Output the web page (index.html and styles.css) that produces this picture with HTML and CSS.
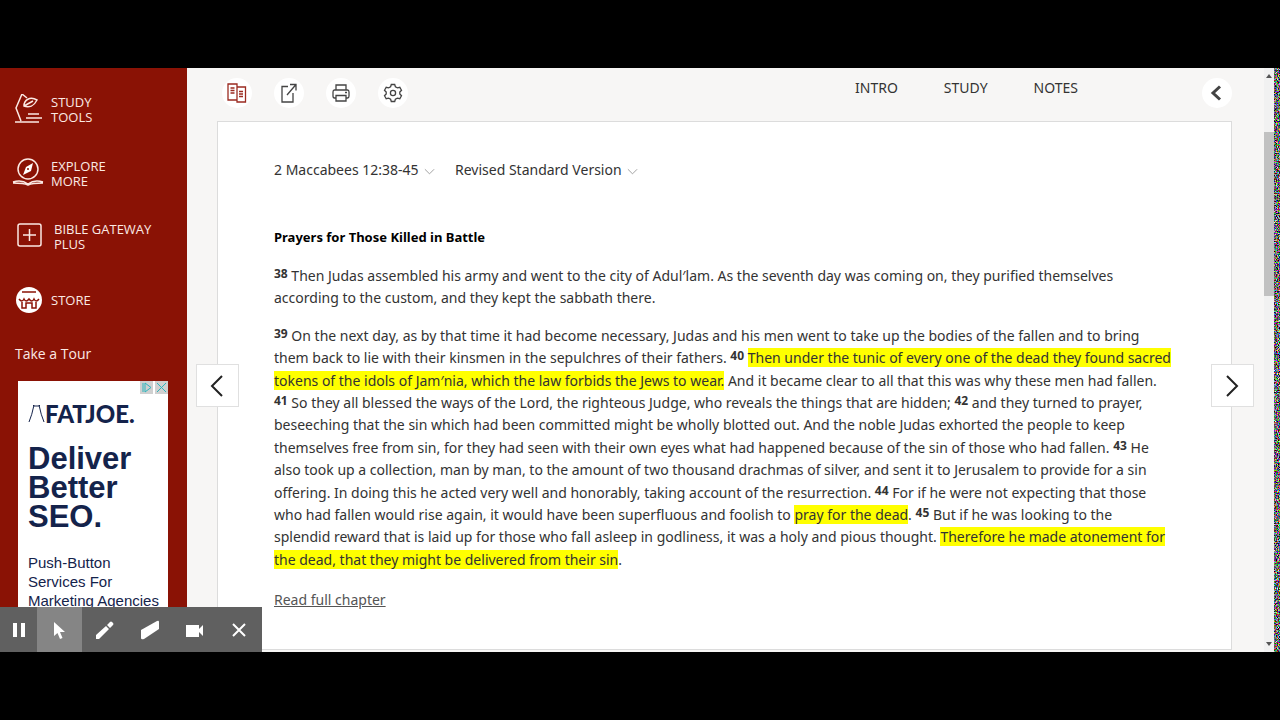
FILE: index.html
```html
<!DOCTYPE html>
<html lang="en">
<head>
	<meta charset="UTF-8">
	<meta name="viewport" content="width=device-width, initial-scale=1.0">
	<title>2 Maccabees 12:38-45 RSV</title>
	<link rel="stylesheet" href="styles.css">
</head>
<body>
	<div class="stage">
		<aside class="sidebar">
			<nav class="menu">
				<a href="#" class="menu-item">
					<svg class="menu-icon" viewBox="0 0 32 32"><path d="M3 28h24M14 24h16M16 20h11M9 27L4 14L10 0L15 4M12 12C12 6 18 2 25 6C22 12 17 14 12 12ZM12 12L21 7"/></svg>
					<span>STUDY<br>TOOLS</span>
				</a>
				<a href="#" class="menu-item">
					<svg class="menu-icon" viewBox="0 0 32 32"><circle cx="16" cy="11" r="10"/><path d="M1 24C7 22 12 23 16 26C20 23 25 22 31 24M1 25C8 25 12 25 16 27C20 25 24 25 31 25"/><path class="fill" d="M21 5l-2 8-8 4 3-8z"/><circle class="dark" cx="16" cy="11" r="1"/></svg>
					<span>EXPLORE<br>MORE</span>
				</a>
				<a href="#" class="menu-item wide">
					<svg class="menu-icon" viewBox="0 0 32 32"><rect x="6" y="3" width="23" height="22" rx="2"/><path d="M17.500 8v12M11 14h13"/></svg>
					<span>BIBLE GATEWAY<br>PLUS</span>
				</a>
				<a href="#" class="menu-item">
					<svg class="menu-icon" viewBox="0 0 32 32"><circle class="fill" cx="17" cy="16" r="13"/><path class="shop" d="M10 8h14M7 15Q10 19 12 15Q14 19 17 15Q20 19 22 15Q24 19 27 15M10 18v6h4v-5h6v5h4v-6"/></svg>
					<span>STORE</span>
				</a>
			</nav>
			<a href="#" class="tour">Take a Tour</a>
			<div class="ad">
				<div class="ad-marks">
					<svg viewBox="0 0 13 13"><path d="M3 2v9M5 2l6 4.500-6 4.500z"/></svg>
					<svg viewBox="0 0 13 13"><path d="M2 2l9 9M11 2l-9 9"/></svg>
				</div>
				<div class="ad-logo">
					<svg viewBox="0 0 17 20"><path d="M1 19Q4 12 6 2M16 19Q13 12 11 2M5 2l1 1h5l1-1"/></svg>
					<span>FATJOE.</span>
				</div>
				<div class="ad-title">Deliver<br>Better<br>SEO.</div>
				<div class="ad-text">Push-Button<br>Services For<br>Marketing Agencies</div>
			</div>
		</aside>

		<main class="main">
			<header class="toolbar">
				<div class="tools">
					<button class="round" aria-label="Parallel view">
						<svg class="red" viewBox="0 0 20 20"><path d="M1 1h9v16H1zM10 4h8.500v15H10zM3.500 5h4M3.500 7.500h4M3.500 10h4M12 8.500h4M12 11h4M12 13.500h4"/></svg>
					</button>
					<button class="round" aria-label="Share">
						<svg viewBox="0 0 20 20"><path d="M9 3.500H3V19h11V10M8 12L17 1.500M11 1.500h6v6"/></svg>
					</button>
					<button class="round" aria-label="Print">
						<svg viewBox="0 0 20 20"><path d="M5 7V2h10v5M5 15H3.500Q2 15 2 13V9Q2 7 3.500 7h13q1.500 0 1.500 2v4q0 2-1.500 2H15M5 12.500h10V18H5zM14 9.500h2"/></svg>
					</button>
					<button class="round" aria-label="Settings">
						<svg viewBox="0 0 20 20"><circle cx="10" cy="10" r="2.600"/><path d="M8.300 1.500h3.400l.7 2.300 2 1.100 2.400-.6 1.700 3-1.700 1.700v2l1.700 1.700-1.700 3-2.400-.6-2 1.100-.7 2.300H8.300l-.7-2.300-2-1.100-2.400.6-1.700-3L3.200 11V9L1.500 7.300l1.700-3 2.400.6 2-1.100z"/></svg>
					</button>
				</div>
				<nav class="tabs">
					<a href="#">INTRO</a>
					<a href="#">STUDY</a>
					<a href="#">NOTES</a>
				</nav>
				<button class="round collapse" aria-label="Collapse panel">
					<svg viewBox="0 0 20 20"><path d="M13 3.500L6 10l7 6.500"/></svg>
				</button>
			</header>

			<article class="passage">
				<div class="pickers">
					<label class="picker">
						<select aria-label="Passage"><option>2 Maccabees 12:38-45</option></select>
						<svg viewBox="0 0 12 8"><path d="M1 1l5 5 5-5"/></svg>
					</label>
					<label class="picker">
						<select aria-label="Translation"><option>Revised Standard Version</option></select>
						<svg viewBox="0 0 12 8"><path d="M1 1l5 5 5-5"/></svg>
					</label>
				</div>
				<h3>Prayers for Those Killed in Battle</h3>
				<p><sup>38</sup> Then Judas assembled his army and went to the city of Adul′lam. As the seventh day was coming on, they purified themselves<br>
				according to the custom, and they kept the sabbath there.</p>
				<p><sup>39</sup> On the next day, as by that time it had become necessary, Judas and his men went to take up the bodies of the fallen and to bring<br>
				them back to lie with their kinsmen in the sepulchres of their fathers. <sup>40</sup> <mark>Then under the tunic of every one of the dead they found sacred<br>
				tokens of the idols of Jam′nia, which the law forbids the Jews to wear.</mark> And it became clear to all that this was why these men had fallen.<br>
				<sup>41</sup> So they all blessed the ways of the Lord, the righteous Judge, who reveals the things that are hidden; <sup>42</sup> and they turned to prayer,<br>
				beseeching that the sin which had been committed might be wholly blotted out. And the noble Judas exhorted the people to keep<br>
				themselves free from sin, for they had seen with their own eyes what had happened because of the sin of those who had fallen. <sup>43</sup> He<br>
				also took up a collection, man by man, to the amount of two thousand drachmas of silver, and sent it to Jerusalem to provide for a sin<br>
				offering. In doing this he acted very well and honorably, taking account of the resurrection. <sup>44</sup> For if he were not expecting that those<br>
				who had fallen would rise again, it would have been superfluous and foolish to <mark>pray for the dead</mark>. <sup>45</sup> But if he was looking to the<br>
				splendid reward that is laid up for those who fall asleep in godliness, it was a holy and pious thought. <mark>Therefore he made atonement for<br>
				the dead, that they might be delivered from their sin</mark>.</p>
				<a href="#" class="full">Read full chapter</a>
			</article>

			<button class="turn prev" aria-label="Previous passage">
				<svg viewBox="0 0 20 24"><path d="M14 2L4 12l10 10"/></svg>
			</button>
			<button class="turn next" aria-label="Next passage">
				<svg viewBox="0 0 20 24"><path d="M4 2l10 10L4 22"/></svg>
			</button>
		</main>

		<div class="scrollbar">
			<svg viewBox="0 0 6 4"><path d="M0 4l3-4 3 4z"/></svg>
			<div class="thumb"></div>
			<svg viewBox="0 0 6 4"><path d="M0 0h6L3 4z"/></svg>
		</div>
		<svg class="noise">
			<filter id="static" x="0" y="0" width="100%" height="100%" color-interpolation-filters="sRGB">
				<feTurbulence type="fractalNoise" baseFrequency="0.9" numOctaves="2" seed="4"/>
				<feColorMatrix values="3 0 0 0 -1.100  0 3 0 0 -1.100  0 0 3 0 -1.100  0 0 0 0 1"/>
			</filter>
			<rect width="100%" height="100%" filter="url(#static)"/>
		</svg>

		<div class="recorder">
			<button class="pause" aria-label="Pause"><svg viewBox="0 0 20 20"><path d="M4 3h4v14H4zM12 3h4v14h-4z"/></svg></button>
			<button class="active" aria-label="Pointer"><svg viewBox="0 0 20 20"><path d="M4 2v14l3.500-3 2.500 6 2.500-1-2.500-6H15z"/></svg></button>
			<button aria-label="Pen"><svg viewBox="0 0 20 20"><path d="M1 19v-4L11 6l3 3L4 19zM12 5l3-3q1-1 2 0l1 1q1 1 0 2l-3 3z"/></svg></button>
			<button aria-label="Eraser"><svg viewBox="0 0 20 20"><path d="M1 10L17 1q2-1 2 1v7L4 19q-3 1-3-1z"/></svg></button>
			<button aria-label="Camera"><svg viewBox="0 0 20 20"><path d="M1 5h13v4l4-4v11l-4-4v5H1z"/></svg></button>
			<button aria-label="Close"><svg class="line" viewBox="0 0 20 20"><path d="M3 4l12 12M15 4L3 16"/></svg></button>
		</div>
	</div>
</body>
</html>
```
FILE: styles.css
```css
* {
	box-sizing: border-box;
}
body {
	margin: 0;
	padding: 68px 0;
	height: 100vh;
	background-color: #000;
	font-family: "Noto Sans", "Open Sans", sans-serif;
	color: #333;
}
svg {
	display: block;
	fill: none;
	stroke: currentColor;
}
button {
	display: flex;
	justify-content: center;
	align-items: center;
	padding: 0;
	border: none;
	cursor: pointer;
}
a {
	color: inherit;
	text-decoration: none;
}
.stage {
	position: relative;
	display: flex;
	height: 100%;
	overflow: hidden;
	background-color: #f7f6f5;
}

/* left menu */
.sidebar {
	width: 187px;
	flex-shrink: 0;
	background-color: #8a1205;
	color: #fbe9e4;
	font-family: "Open Sans", "Noto Sans", sans-serif;
}
.menu {
	display: flex;
	flex-direction: column;
	gap: 32px;
	padding: 26px 0 0 12px;
}
.menu-item {
	display: flex;
	align-items: center;
	gap: 7px;
	height: 32px;
	font-size: 13px;
	line-height: 15px;
}
.menu-item.wide {
	gap: 10px;
	height: 30px;
}
.menu-icon {
	width: 32px;
	height: 32px;
	stroke-width: 1.5;
	flex-shrink: 0;
}
.menu-icon .fill {
	fill: #fff;
	stroke: none;
}
.menu-icon .dark {
	fill: #8a1205;
	stroke: none;
}
.menu-icon .shop {
	stroke: #8a1205;
}
.tour {
	display: block;
	margin: 28px 0 17px 15px;
	font-size: 14px;
	line-height: 20px;
}
.ad {
	width: 150px;
	height: 260px;
	margin-left: 18px;
	padding-left: 10px;
	background-color: #fff;
	color: #14234b;
	font-family: "Liberation Sans", Arial, sans-serif;
}
.ad-marks {
	display: flex;
	justify-content: flex-end;
	gap: 2px;
}
.ad-marks svg {
	width: 13px;
	height: 13px;
	background-color: #d0d0d0;
	stroke: #2cb5bd;
}
.ad-logo {
	display: flex;
	align-items: center;
	height: 38px;
	font-family: Lato, sans-serif;
	font-size: 24px;
	font-weight: 900;
}
.ad-logo svg {
	width: 17px;
	height: 20px;
}
.ad-title {
	margin-top: 12px;
	font-size: 31px;
	font-weight: bold;
	line-height: 29px;
}
.ad-text {
	margin-top: 22px;
	font-size: 15px;
	line-height: 19px;
	white-space: nowrap;
}

/* passage column */
.main {
	position: relative;
	flex: 1;
	min-width: 0;
	padding: 0 32px 0 30px;
}
.toolbar {
	display: flex;
	align-items: center;
	height: 53px;
	padding: 0 0 4px 5px;
}
.tools {
	display: flex;
	gap: 22px;
	flex: 1;
}
.round {
	width: 30px;
	height: 30px;
	border-radius: 50%;
	background-color: #fff;
	color: #444;
}
.round svg {
	width: 20px;
	height: 20px;
	stroke-width: 1.3;
}
.round .red {
	color: #9b2a20;
}
.tabs {
	display: flex;
	gap: 46px;
	margin-right: 124px;
	padding-bottom: 10px;
	font-size: 14px;
	line-height: 20px;
}
.collapse svg {
	stroke-width: 3;
}
.passage {
	padding: 36px 56px 38px;
	border: 1px solid #dcdcdc;
	background-color: #fff;
	font-size: 14px;
	line-height: 1.6;
	white-space: nowrap;
}
.pickers {
	display: flex;
	gap: 20px;
	height: 24px;
}
.picker {
	display: flex;
	align-items: center;
	gap: 5px;
}
.picker select {
	appearance: none;
	padding: 0;
	border: none;
	background: none;
	font: inherit;
	color: inherit;
}
.picker svg {
	width: 11px;
	height: 8px;
	margin-top: 4px;
	color: #999;
}
.passage h3 {
	margin: 43px 0 16px;
	font-size: 13px;
	line-height: 24px;
	color: #000;
}
.passage p {
	margin: 0 0 15px;
}
.passage sup {
	font-size: 12px;
	font-weight: bold;
	line-height: 0;
	vertical-align: 3px;
}
mark {
	background-color: #ff0;
	color: inherit;
}
.full {
	display: inline-block;
	margin-top: 3px;
	text-decoration: underline;
	color: #555;
}
.turn {
	position: absolute;
	top: 296px;
	width: 43px;
	height: 43px;
	border: 1px solid #e0e0e0;
	background-color: #fff;
	color: #222;
}
.turn svg {
	width: 20px;
	height: 24px;
	stroke-width: 2;
}
.prev {
	left: 9px;
}
.next {
	right: 10px;
}

/* window edge */
.scrollbar {
	display: flex;
	flex-direction: column;
	align-items: center;
	flex-shrink: 0;
	width: 10px;
	padding: 6px 0;
	background-color: #f1f1f1;
}
.scrollbar svg {
	width: 6px;
	height: 4px;
	fill: #555;
	stroke: none;
}
.thumb {
	width: 100%;
	height: 164px;
	margin: 54px 0 auto;
	background-color: #c1c1c1;
}
.noise {
	flex-shrink: 0;
	width: 6px;
	height: 100%;
}

/* screen recorder controls */
.recorder {
	position: absolute;
	left: 0;
	bottom: 0;
	display: flex;
	height: 45px;
	background-color: #606060;
}
.recorder button {
	width: 45px;
	background: none;
	color: #fff;
}
.recorder .pause {
	width: 37px;
}
.recorder .active {
	background-color: #858585;
}
.recorder svg {
	width: 20px;
	height: 20px;
	fill: #fff;
	stroke: none;
}
.recorder .line {
	stroke: #fff;
	stroke-width: 2;
}
```
